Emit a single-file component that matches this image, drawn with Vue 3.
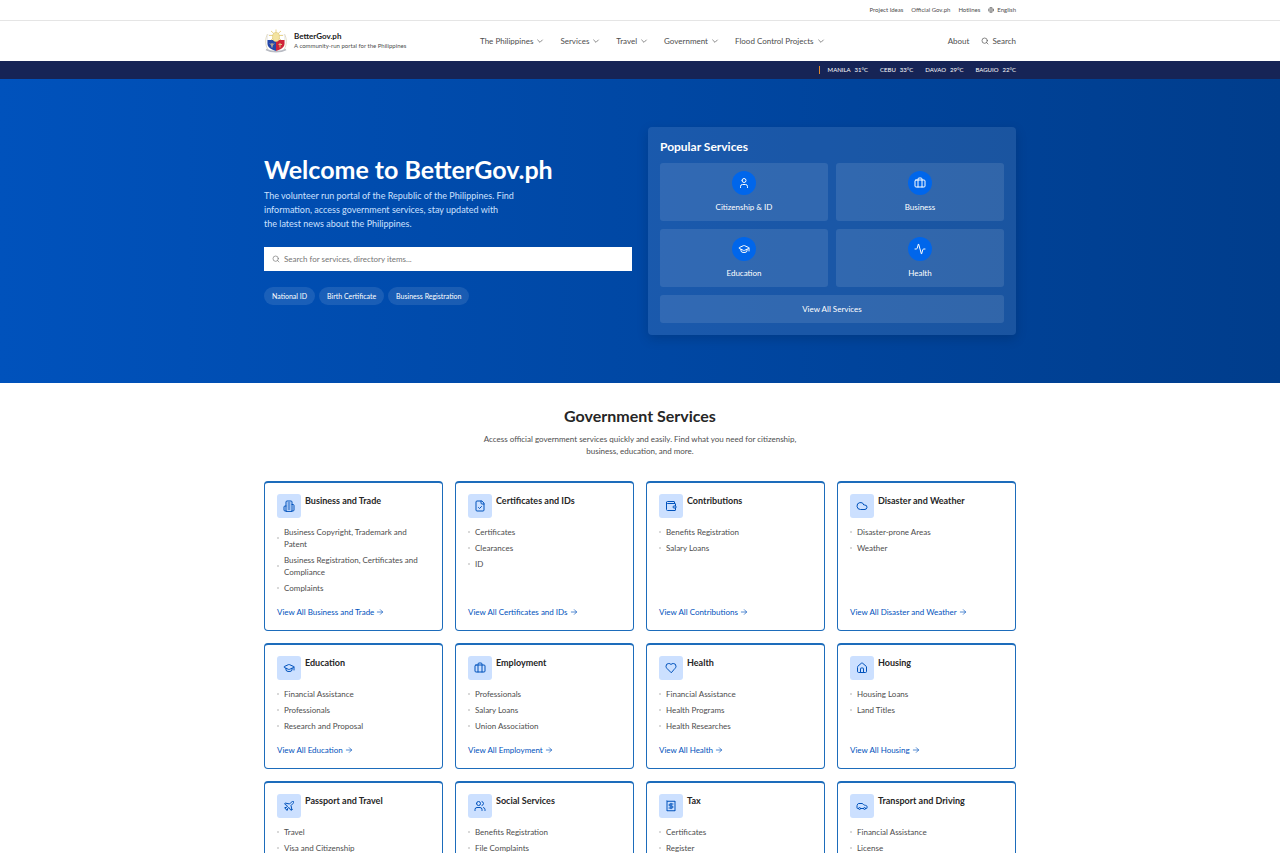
<script setup>
import { ref } from 'vue'

const query = ref('')

const topLinks = ['Project Ideas', 'Official Gov.ph', 'Hotlines']
const menu = ['The Philippines', 'Services', 'Travel', 'Government', 'Flood Control Projects']
const weather = [
    { city: 'MANILA', temp: '31°C' },
    { city: 'CEBU', temp: '33°C' },
    { city: 'DAVAO', temp: '29°C' },
    { city: 'BAGUIO', temp: '22°C' }
]
const tags = ['National ID', 'Birth Certificate', 'Business Registration']

const icons = {
    user: ['M8 7a4 4 0 1 0 8 0a4 4 0 1 0-8 0', 'M19 21v-2a4 4 0 0 0-4-4H9a4 4 0 0 0-4 4v2'],
    briefcase: ['M16 20V4a2 2 0 0 0-2-2h-4a2 2 0 0 0-2 2v16', 'M4 6h16a2 2 0 0 1 2 2v10a2 2 0 0 1-2 2H4a2 2 0 0 1-2-2V8a2 2 0 0 1 2-2z'],
    cap: ['M21.42 10.922a1 1 0 0 0-.019-1.838L12.83 5.18a2 2 0 0 0-1.66 0L2.6 9.08a1 1 0 0 0 0 1.832l8.57 3.908a2 2 0 0 0 1.66 0z', 'M22 10v6', 'M6 12.5V16a6 3 0 0 0 12 0v-3.5'],
    activity: ['M22 12h-2.48a2 2 0 0 0-1.93 1.46l-2.35 8.36a.25.25 0 0 1-.48 0L9.24 2.18a.25.25 0 0 0-.48 0l-2.35 8.36A2 2 0 0 1 4.49 12H2'],
    building: ['M6 22V4a2 2 0 0 1 2-2h8a2 2 0 0 1 2 2v18Z', 'M6 12H4a2 2 0 0 0-2 2v6a2 2 0 0 0 2 2h2', 'M18 9h2a2 2 0 0 1 2 2v9a2 2 0 0 1-2 2h-2', 'M10 6h4', 'M10 10h4', 'M10 14h4', 'M10 18h4'],
    file: ['M15 2H6a2 2 0 0 0-2 2v16a2 2 0 0 0 2 2h12a2 2 0 0 0 2-2V7Z', 'M14 2v4a2 2 0 0 0 2 2h4', 'm9 15 2 2 4-4'],
    wallet: ['M19 7V4a1 1 0 0 0-1-1H5a2 2 0 0 0 0 4h15a1 1 0 0 1 1 1v4h-3a2 2 0 0 0 0 4h3a1 1 0 0 0 1-1v-2a1 1 0 0 0-1-1', 'M3 5v14a2 2 0 0 0 2 2h15a1 1 0 0 0 1-1v-4'],
    cloud: ['M17.5 19H9a7 7 0 1 1 6.71-9h1.79a4.5 4.5 0 1 1 0 9Z'],
    heart: ['M19 14c1.49-1.46 3-3.21 3-5.5A5.5 5.5 0 0 0 16.5 3c-1.76 0-3 .5-4.5 2-1.5-1.5-2.74-2-4.5-2A5.5 5.5 0 0 0 2 8.5c0 2.3 1.5 4.05 3 5.5l7 7Z'],
    house: ['M15 21v-8a1 1 0 0 0-1-1h-4a1 1 0 0 0-1 1v8', 'M3 10a2 2 0 0 1 .709-1.528l7-5.999a2 2 0 0 1 2.582 0l7 5.999A2 2 0 0 1 21 10v9a2 2 0 0 1-2 2H5a2 2 0 0 1-2-2z'],
    plane: ['M17.8 19.2 16 11l3.5-3.5C21 6 21.5 4 21 3c-1-.5-3 0-4.5 1.5L13 8 4.8 6.2c-.5-.1-.9.1-1.1.5l-.3.5c-.2.5-.1 1 .3 1.3L9 12l-2 3H4l-1 1 3 2 2 3 1-1v-3l3-2 3.5 5.3c.3.4.8.5 1.3.3l.5-.2c.4-.3.6-.7.5-1.2z'],
    users: ['M16 21v-2a4 4 0 0 0-4-4H6a4 4 0 0 0-4 4v2', 'M5 7a4 4 0 1 0 8 0a4 4 0 1 0-8 0', 'M22 21v-2a4 4 0 0 0-3-3.87', 'M16 3.13a4 4 0 0 1 0 7.75'],
    receipt: ['M4 2v20l2-1 2 1 2-1 2 1 2-1 2 1 2-1 2 1V2l-2 1-2-1-2 1-2-1-2 1-2-1-2 1Z', 'M16 8h-6a2 2 0 1 0 0 4h4a2 2 0 1 1 0 4H8', 'M12 17.5v-11'],
    car: ['M19 17h2c.6 0 1-.4 1-1v-3c0-.9-.7-1.7-1.5-1.9C18.7 10.6 16 10 16 10s-1.3-1.4-2.2-2.3c-.5-.4-1.1-.7-1.8-.7H5c-.6 0-1.1.4-1.4.9l-1.4 2.9A3.7 3.7 0 0 0 2 12v4c0 .6.4 1 1 1h2', 'M5 17a2 2 0 1 0 4 0a2 2 0 1 0-4 0', 'M9 17h6', 'M15 17a2 2 0 1 0 4 0a2 2 0 1 0-4 0']
}

const popular = [
    { name: 'Citizenship & ID', icon: 'user' },
    { name: 'Business', icon: 'briefcase' },
    { name: 'Education', icon: 'cap' },
    { name: 'Health', icon: 'activity' }
]

const services = [
    { name: 'Business and Trade', icon: 'building', items: ['Business Copyright, Trademark and Patent', 'Business Registration, Certificates and Compliance', 'Complaints'] },
    { name: 'Certificates and IDs', icon: 'file', items: ['Certificates', 'Clearances', 'ID'] },
    { name: 'Contributions', icon: 'wallet', items: ['Benefits Registration', 'Salary Loans'] },
    { name: 'Disaster and Weather', icon: 'cloud', items: ['Disaster-prone Areas', 'Weather'] },
    { name: 'Education', icon: 'cap', items: ['Financial Assistance', 'Professionals', 'Research and Proposal'] },
    { name: 'Employment', icon: 'briefcase', items: ['Professionals', 'Salary Loans', 'Union Association'] },
    { name: 'Health', icon: 'heart', items: ['Financial Assistance', 'Health Programs', 'Health Researches'] },
    { name: 'Housing', icon: 'house', items: ['Housing Loans', 'Land Titles'] },
    { name: 'Passport and Travel', icon: 'plane', items: ['Travel', 'Visa and Citizenship'] },
    { name: 'Social Services', icon: 'users', items: ['Benefits Registration', 'File Complaints'] },
    { name: 'Tax', icon: 'receipt', items: ['Certificates', 'Register'] },
    { name: 'Transport and Driving', icon: 'car', items: ['Financial Assistance', 'License'] }
]
</script>

<template>
    <div class="page">
        <div class="topbar">
            <div class="container topbar-inner">
                <a v-for="link in topLinks" :key="link" href="#">{{ link }}</a>
                <button class="lang">
                    <svg class="icon" viewBox="0 0 24 24">
                        <circle cx="12" cy="12" r="10" />
                        <path d="M12 2a14.5 14.5 0 0 0 0 20 14.5 14.5 0 0 0 0-20M2 12h20" />
                    </svg>
                    English
                </button>
            </div>
        </div>

        <header class="header">
            <div class="container header-inner">
                <a class="brand" href="#">
                    <svg class="logo" viewBox="0 0 48 48">
                        <path d="M7 10C2 20 2 32 8 41M41 10c5 10 5 22-1 31" fill="none" stroke="#e3dcc4" stroke-width="2" />
                        <path d="M7 12h34v17c0 8-8 12-17 15C15 41 7 37 7 29z" fill="#fff" stroke="#dcdce0" />
                        <path d="M7 22h17v22C15 41 7 37 7 29z" fill="#2447a8" />
                        <path d="M24 22h17v7c0 8-8 12-17 15z" fill="#cf2338" />
                        <path d="M24 1v24M10 13h28M14 4l20 18M34 4L14 22" stroke="#e9d68c" stroke-width="2" />
                        <ellipse cx="24" cy="16" rx="7" ry="9" fill="#f3e3a0" stroke="#d8bf68" />
                        <path d="M12 29l4 4 4-4M16 28v9M29 31h7M32 28v9" stroke="#e0c48a" stroke-width="2" fill="none" />
                        <path d="M4 41c10 6 30 6 40 0" fill="none" stroke="#b9bcc4" stroke-width="3" />
                    </svg>
                    <span>
                        <strong>BetterGov.ph</strong>
                        <small>A community-run portal for the Philippines</small>
                    </span>
                </a>
                <nav class="menu">
                    <a v-for="item in menu" :key="item" href="#">
                        {{ item }}
                        <svg class="icon" viewBox="0 0 24 24"><path d="m5 9 7 7 7-7" /></svg>
                    </a>
                </nav>
                <div class="header-right">
                    <a href="#">About</a>
                    <a href="#">
                        <svg class="icon" viewBox="0 0 24 24"><circle cx="11" cy="11" r="8" /><path d="m21 21-4.3-4.3" /></svg>
                        Search
                    </a>
                </div>
            </div>
        </header>

        <div class="ticker">
            <div class="container ticker-inner">
                <span class="ticker-line"></span>
                <span v-for="w in weather" :key="w.city" class="ticker-item">
                    <span>{{ w.city }}</span>
                    <span>{{ w.temp }}</span>
                </span>
            </div>
        </div>

        <section class="hero">
            <div class="container hero-grid">
                <div>
                    <h1>Welcome to BetterGov.ph</h1>
                    <p class="lead">
                        The volunteer run portal of the Republic of the Philippines. Find
                        information, access government services, stay updated with<br>
                        the latest news about the Philippines.
                    </p>
                    <label class="search">
                        <svg class="icon" viewBox="0 0 24 24"><circle cx="11" cy="11" r="8" /><path d="m21 21-4.3-4.3" /></svg>
                        <input v-model="query" type="text" aria-label="Search" placeholder="Search for services, directory items...">
                    </label>
                    <div class="tags">
                        <a v-for="tag in tags" :key="tag" href="#">{{ tag }}</a>
                    </div>
                </div>
                <div class="popular">
                    <h2>Popular Services</h2>
                    <div class="popular-grid">
                        <a v-for="p in popular" :key="p.name" class="tile" href="#">
                            <span class="tile-icon">
                                <svg class="icon" viewBox="0 0 24 24"><path v-for="d in icons[p.icon]" :key="d" :d="d" /></svg>
                            </span>
                            {{ p.name }}
                        </a>
                        <a class="tile all" href="#">View All Services</a>
                    </div>
                </div>
            </div>
        </section>

        <section class="services">
            <div class="container">
                <h2>Government Services</h2>
                <p class="intro">Access official government services quickly and easily. Find what you need for citizenship, business, education, and more.</p>
                <div class="cards">
                    <article v-for="s in services" :key="s.name" class="card">
                        <div class="card-head">
                            <span class="card-icon">
                                <svg class="icon" viewBox="0 0 24 24"><path v-for="d in icons[s.icon]" :key="d" :d="d" /></svg>
                            </span>
                            <h3>{{ s.name }}</h3>
                        </div>
                        <ul>
                            <li v-for="item in s.items" :key="item"><a href="#">{{ item }}</a></li>
                        </ul>
                        <a class="more" href="#">
                            View All {{ s.name }}
                            <svg class="icon" viewBox="0 0 24 24"><path d="M4 12h16M13 5l7 7-7 7" /></svg>
                        </a>
                    </article>
                </div>
            </div>
        </section>
    </div>
</template>

<style>
body {
    margin: 0;
}
</style>

<style scoped>
.page {
    background-color: #fff;
    color: #4d4d4d;
    font-family: Lato, "Liberation Sans", sans-serif;
    font-size: 8px;
    line-height: 12px;
}

h1, h2, h3, p, ul {
    margin: 0;
    padding: 0;
}

a {
    color: inherit;
    text-decoration: none;
}

.container {
    max-width: 752px;
    margin: 0 auto;
    padding: 0 16px;
}

.icon {
    width: 8px;
    height: 8px;
    flex: none;
    fill: none;
    stroke: currentColor;
    stroke-width: 2;
    stroke-linecap: round;
    stroke-linejoin: round;
}

.topbar {
    border-bottom: 1px solid #e5e5e5;
    font-size: 6px;
}

.topbar-inner {
    display: flex;
    justify-content: flex-end;
    align-items: center;
    gap: 8px;
    height: 20px;
}

.lang {
    display: flex;
    align-items: center;
    gap: 3px;
    padding: 0;
    border: 0;
    background: none;
    color: inherit;
    font: inherit;
}

.lang .icon {
    width: 6px;
    height: 6px;
}

.header-inner {
    display: flex;
    align-items: center;
    height: 40px;
}

.brand {
    display: flex;
    align-items: center;
    gap: 6px;
    width: 216px;
}

.logo {
    width: 24px;
    height: 24px;
}

.brand strong, .brand small {
    display: block;
    line-height: 10px;
}

.brand strong {
    color: #1a1a1a;
}

.brand small {
    font-size: 6px;
}

.menu {
    display: flex;
    gap: 16px;
}

.menu a, .header-right a {
    display: flex;
    align-items: center;
    gap: 3px;
}

.header-right {
    display: flex;
    gap: 12px;
    margin-left: auto;
}

.ticker {
    background-color: #162456;
    color: #fff;
    font-size: 6px;
}

.ticker-inner {
    display: flex;
    justify-content: flex-end;
    align-items: center;
    height: 18px;
    gap: 12px;
}

.ticker-line {
    height: 8px;
    margin-right: -4px;
    border-left: 1px solid #e08a2c;
}

.ticker-item {
    display: flex;
    gap: 4px;
}

.hero {
    padding: 48px 0;
    background: linear-gradient(to right, #0052bc, #003d8c);
    color: #fff;
}

.hero-grid {
    display: grid;
    grid-template-columns: 1fr 1fr;
    align-items: center;
    gap: 16px;
}

h1 {
    margin-bottom: 8px;
    font-size: 25px;
    line-height: 24px;
}

.lead {
    max-width: 256px;
    margin-bottom: 16px;
    color: #cce0ff;
    font-size: 9px;
    line-height: 14px;
}

.search {
    display: flex;
    align-items: center;
    gap: 4px;
    height: 24px;
    margin-bottom: 16px;
    padding: 0 8px;
    background-color: #fff;
    color: #757575;
}

.search input {
    flex: 1;
    padding: 0;
    border: 0;
    outline: 0;
    background: none;
    color: #333;
    font: inherit;
}

.search input::placeholder {
    color: #757575;
}

.tags {
    display: flex;
    gap: 4px;
}

.tags a {
    padding: 3px 8px;
    border-radius: 9px;
    background-color: rgba(255, 255, 255, .1);
    font-size: 7px;
}

.popular {
    padding: 12px;
    border-radius: 4px;
    background-color: rgba(255, 255, 255, .1);
    box-shadow: 0 4px 12px rgba(0, 0, 0, .15);
}

.popular h2 {
    margin-bottom: 8px;
    font-size: 12px;
    line-height: 16px;
}

.popular-grid {
    display: grid;
    grid-template-columns: 1fr 1fr;
    gap: 8px;
}

.tile {
    display: flex;
    flex-direction: column;
    align-items: center;
    gap: 6px;
    padding: 8px;
    border-radius: 3px;
    background-color: rgba(255, 255, 255, .1);
}

.tile-icon {
    display: grid;
    place-items: center;
    width: 24px;
    height: 24px;
    border-radius: 50%;
    background-color: #0066eb;
}

.tile-icon .icon, .card-icon .icon {
    width: 12px;
    height: 12px;
}

.all {
    grid-column: span 2;
}

.services {
    padding: 24px 0;
}

.services h2 {
    margin-bottom: 8px;
    color: #262626;
    font-size: 16px;
    line-height: 18px;
    text-align: center;
}

.intro {
    max-width: 336px;
    margin: 0 auto 24px;
    text-align: center;
}

.cards {
    display: grid;
    grid-template-columns: repeat(4, 1fr);
    gap: 12px;
}

.card {
    display: flex;
    flex-direction: column;
    padding: 11px 12px 12px;
    border: 1px solid #1d6cbb;
    border-top-width: 2px;
    border-radius: 4px;
}

.card-head {
    display: flex;
    gap: 4px;
    margin-bottom: 8px;
}

.card-icon {
    display: grid;
    place-items: center;
    width: 24px;
    height: 24px;
    border-radius: 3px;
    background-color: #cce0ff;
    color: #0052bc;
}

h3 {
    color: #262626;
    font-size: 9px;
    line-height: 14px;
}

ul {
    display: flex;
    flex-direction: column;
    gap: 4px;
    margin-bottom: 12px;
    list-style: none;
}

li {
    display: flex;
    align-items: center;
    gap: 5px;
}

li::before {
    content: "";
    flex: none;
    width: 2px;
    height: 2px;
    border-radius: 50%;
    background-color: #ccc;
}

.more {
    display: flex;
    align-items: center;
    gap: 2px;
    margin-top: auto;
    color: #0052bc;
}
</style>
